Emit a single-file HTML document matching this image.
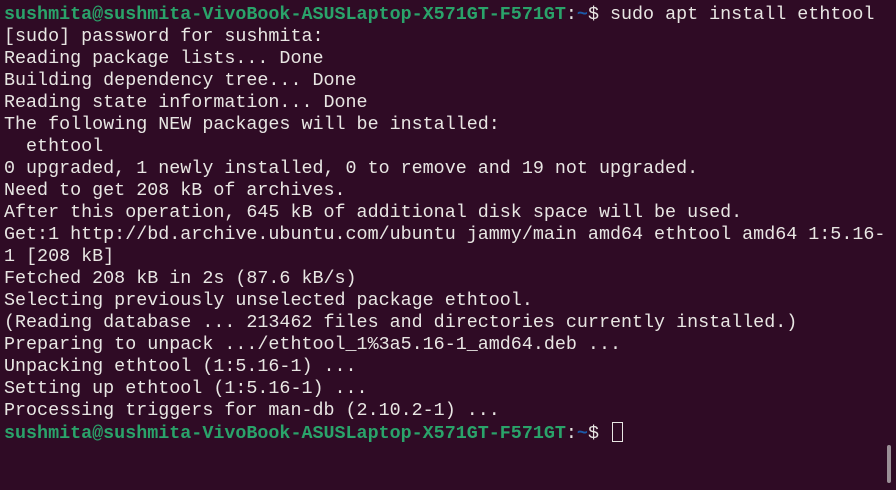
<!DOCTYPE html>
<html><head><meta charset="utf-8"><style>
html,body{margin:0;padding:0;}
body{width:896px;height:490px;background:#2f0b25;overflow:hidden;position:relative;}
pre{margin:0;position:absolute;left:4px;top:4px;font-family:"Liberation Mono",monospace;font-size:18.37px;line-height:22px;color:#e8e6e3;}
.g{color:#2aa36a;font-weight:bold;}
.b{color:#1c5aa8;font-weight:bold;}
.cur{display:inline-block;width:11px;height:20px;border:1.5px solid #e8e6e3;vertical-align:-4px;margin-left:2px;box-sizing:border-box;}
.sb{position:absolute;left:887px;top:445px;width:4px;height:38px;border-radius:2px;background:#9a8f96;}
</style></head><body>
<pre><span class="g">sushmita@sushmita-VivoBook-ASUSLaptop-X571GT-F571GT</span>:<span class="b">~</span>$ sudo apt install ethtool
[sudo] password for sushmita: 
Reading package lists... Done
Building dependency tree... Done
Reading state information... Done
The following NEW packages will be installed:
  ethtool
0 upgraded, 1 newly installed, 0 to remove and 19 not upgraded.
Need to get 208 kB of archives.
After this operation, 645 kB of additional disk space will be used.
Get:1 http://bd.archive.ubuntu.com/ubuntu jammy/main amd64 ethtool amd64 1:5.16-
1 [208 kB]
Fetched 208 kB in 2s (87.6 kB/s)
Selecting previously unselected package ethtool.
(Reading database ... 213462 files and directories currently installed.)
Preparing to unpack .../ethtool_1%3a5.16-1_amd64.deb ...
Unpacking ethtool (1:5.16-1) ...
Setting up ethtool (1:5.16-1) ...
Processing triggers for man-db (2.10.2-1) ...
<span class="g">sushmita@sushmita-VivoBook-ASUSLaptop-X571GT-F571GT</span>:<span class="b">~</span>$ <span class="cur"></span></pre>
<div class="sb"></div>
</body></html>
